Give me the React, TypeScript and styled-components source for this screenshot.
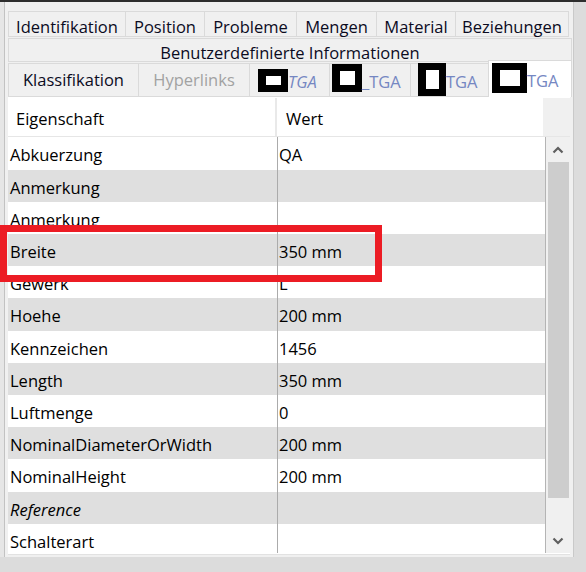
import React from "react";
import styled, { createGlobalStyle } from "styled-components";

const Global = createGlobalStyle`
  html, body { margin: 0; padding: 0; background: #dcdcdc; }
  body { font-family: "Open Sans", "Noto Sans", "Liberation Sans", sans-serif; }
  * { box-sizing: border-box; }
`;

const Frame = styled.div`
  position: relative;
  width: 586px;
  height: 572px;
  overflow: hidden;
  background: #dcdcdc;
  border-top: 2px solid #2e2e2e;
  display: flex;
  font-size: 16.5px;
  color: #000;
`;

const LeftRail = styled.div`
  width: 5px;
  height: 555px;
  background: #e6e6e6;
  border-right: 1px solid #c2c2c2;
`;

const Panel = styled.div`
  width: 569px;
  height: 555px;
  background: #f0f0f0;
  border-right: 1px solid #c9c9c9;
  padding: 8px 1px 0 3px;
  display: flex;
  flex-direction: column;
`;

const TabRow = styled.div<{ $h: number; $w: number }>`
  display: flex;
  height: ${(p) => p.$h}px;
  width: ${(p) => p.$w}px;
  margin-left: 1px;
  align-items: flex-end;
  flex-shrink: 0;
`;

const Tab = styled.div<{ $w: number; $active?: boolean; $muted?: boolean }>`
  width: ${(p) => p.$w}px;
  height: ${(p) => (p.$active ? "calc(100% + 2px)" : "calc(100% - 1px)")};
  margin-top: ${(p) => (p.$active ? "-2px" : "0")};
  background: ${(p) => (p.$active ? "#ffffff" : "#f0f0f0")};
  border: 1px solid #dadada;
  border-bottom: ${(p) => (p.$active ? "none" : "1px solid #dadada")};
  margin-left: -1px;
  display: flex;
  align-items: center;
  justify-content: center;
  white-space: nowrap;
  color: ${(p) => (p.$muted ? "#a2a2a2" : "#0b0b1e")};
  line-height: 22px;
`;

const TopTab = styled(Tab)`
  align-items: flex-start;
  padding-top: 4px;
`;

const WideTab = styled(Tab)`
  align-items: flex-start;
  padding-top: 3px;
`;

const CodeTab = styled(Tab)`
  justify-content: flex-start;
`;

const Redact = styled.span<{ $w: number; $h: number; $dy: number; $ml: number }>`
  display: inline-block;
  width: ${(p) => p.$w}px;
  height: ${(p) => p.$h}px;
  border: 7px solid #000;
  border-left-width: 8px;
  background: #fff;
  margin-left: ${(p) => p.$ml}px;
  position: relative;
  top: ${(p) => p.$dy}px;
  flex-shrink: 0;
`;

const Tga = styled.span<{ $italic?: boolean }>`
  color: #7587c2;
  font-style: ${(p) => (p.$italic ? "italic" : "normal")};
  position: relative;
  top: 2px;
`;

const Content = styled.div`
  width: 562px;
  height: 458px;
  background: #ffffff;
  border-bottom: 1px solid #e2e2e2;
  display: flex;
  flex-direction: column;
  flex-shrink: 0;
`;

const Header = styled.div`
  height: 40px;
  padding-top: 1px;
  display: grid;
  grid-template-columns: 267px 2px 266px 27px;
  border-bottom: 1px solid #e6e6e6;
  flex-shrink: 0;
`;

const HeadCell = styled.div<{ $pl: number }>`
  display: flex;
  align-items: center;
  padding-left: ${(p) => p.$pl}px;
  padding-top: 3px;
  background: #fff;
`;

const HeadSep = styled.div`
  background: #e9e9e9;
`;

const HeadFill = styled.div`
  background: #f0f0f0;
`;

const BodyArea = styled.div`
  display: flex;
  height: 416px;
  overflow: hidden;
`;

const Rows = styled.div`
  width: 538px;
  border-right: 1px solid #b4b4b4;
  display: flex;
  flex-direction: column;
  overflow: hidden;
`;

const Row = styled.div<{ $alt: boolean; $h: number }>`
  height: ${(p) => p.$h}px;
  flex-shrink: 0;
  display: grid;
  grid-template-columns: 270px 267px;
  background: ${(p) => (p.$alt ? "#dfdfdf" : "#ffffff")};
`;

const Cell = styled.div<{ $first?: boolean; $italic?: boolean }>`
  display: flex;
  align-items: center;
  padding-left: ${(p) => (p.$first ? "2px" : "1px")};
  padding-top: 2px;
  border-right: ${(p) => (p.$first ? "1px solid #ababab" : "none")};
  font-style: ${(p) => (p.$italic ? "italic" : "normal")};
  white-space: nowrap;
`;

const Scrollbar = styled.div`
  width: 24px;
  background: #f0f0f0;
  display: flex;
  flex-direction: column;
  align-items: center;
`;

const ScrollButton = styled.div`
  height: 25px;
  width: 100%;
  display: flex;
  align-items: center;
  justify-content: center;
`;

const Track = styled.div`
  flex: 1;
  width: 100%;
  padding-left: 2px;
`;

const Thumb = styled.div`
  width: 21px;
  height: 336px;
  background: #cdcdcd;
`;

const Highlight = styled.div`
  position: absolute;
  left: 0;
  top: 223px;
  width: 382px;
  height: 57px;
  border: 7px solid #ec1c24;
  pointer-events: none;
`;

const Chevron = ({ up }: { up: boolean }) => (
  <svg width="12" height="8" viewBox="0 0 12 8">
    <polyline
      points={up ? "1.5,6.5 6,2 10.5,6.5" : "1.5,1.5 6,6 10.5,1.5"}
      fill="none"
      stroke="#5f5f5f"
      strokeWidth="2.2"
    />
  </svg>
);

const rows: { k: string; v: string; h: number; i?: boolean }[] = [
  { k: "Abkuerzung", v: "QA", h: 33 },
  { k: "Anmerkung", v: "", h: 32 },
  { k: "Anmerkung", v: "", h: 32 },
  { k: "Breite", v: "350 mm", h: 32 },
  { k: "Gewerk", v: "L", h: 32 },
  { k: "Hoehe", v: "200 mm", h: 33 },
  { k: "Kennzeichen", v: "1456", h: 32 },
  { k: "Length", v: "350 mm", h: 32 },
  { k: "Luftmenge", v: "0", h: 32 },
  { k: "NominalDiameterOrWidth", v: "200 mm", h: 32 },
  { k: "NominalHeight", v: "200 mm", h: 33 },
  { k: "Reference", v: "", h: 32, i: true },
  { k: "Schalterart", v: "", h: 32 },
];

export default function App() {
  return (
    <>
      <Global />
      <Frame>
        <LeftRail />
        <Panel>
          <TabRow $h={27} $w={561}>
            <TopTab $w={118}>Identifikation</TopTab>
            <TopTab $w={80}>Position</TopTab>
            <TopTab $w={93}>Probleme</TopTab>
            <TopTab $w={81}>Mengen</TopTab>
            <TopTab $w={80}>Material</TopTab>
            <TopTab $w={114}>Beziehungen</TopTab>
          </TabRow>
          <TabRow $h={25} $w={564}>
            <WideTab $w={564}>Benutzerdefinierte Informationen</WideTab>
          </TabRow>
          <TabRow $h={35} $w={564}>
            <Tab $w={131}>Klassifikation</Tab>
            <Tab $w={112} $muted>Hyperlinks</Tab>
            <CodeTab $w={81}>
              <Redact $w={30} $h={23} $dy={0} $ml={8} />
              <Tga $italic>TGA</Tga>
            </CodeTab>
            <CodeTab $w={82}>
              <Redact $w={30} $h={28} $dy={-2} $ml={2} />
              <Tga>_TGA</Tga>
            </CodeTab>
            <CodeTab $w={79}>
              <Redact $w={28} $h={33} $dy={-1} $ml={7} />
              <Tga>TGA</Tga>
            </CodeTab>
            <CodeTab $w={84} $active>
              <Redact $w={35} $h={30} $dy={-1} $ml={3} />
              <Tga>TGA</Tga>
            </CodeTab>
          </TabRow>
          <Content>
            <Header>
              <HeadCell $pl={8}>Eigenschaft</HeadCell>
              <HeadSep />
              <HeadCell $pl={9}>Wert</HeadCell>
              <HeadFill />
            </Header>
            <BodyArea>
              <Rows>
                {rows.map((r, idx) => (
                  <Row key={idx} $alt={idx % 2 === 1} $h={r.h}>
                    <Cell $first $italic={r.i}>
                      {r.k}
                    </Cell>
                    <Cell>{r.v}</Cell>
                  </Row>
                ))}
              </Rows>
              <Scrollbar>
                <ScrollButton>
                  <Chevron up />
                </ScrollButton>
                <Track>
                  <Thumb />
                </Track>
                <ScrollButton>
                  <Chevron up={false} />
                </ScrollButton>
              </Scrollbar>
            </BodyArea>
          </Content>
        </Panel>
        <Highlight />
      </Frame>
    </>
  );
}
